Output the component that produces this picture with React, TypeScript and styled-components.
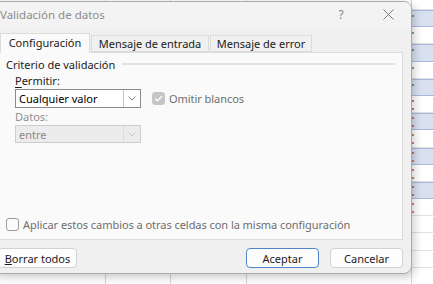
import React from "react";
import styled, { createGlobalStyle } from "styled-components";

const FONT = `"Noto Sans", "Open Sans", sans-serif`;
const ROW_HEIGHT = 17.2;
const BLUE_ROWS = [1, 3, 5, 7, 9, 11];
const GREEN_ROWS = [0, 1, 2, 3, 4, 5];
const RED_ROWS = [6, 7, 8, 9, 10, 11, 12];

const GlobalStyle = createGlobalStyle`
  html, body {
    margin: 0;
    padding: 0;
    background: #ffffff;
  }
  body {
    font-family: ${FONT};
    font-size: 11px;
  }
`;

const Desktop = styled.div`
  position: relative;
  width: 434px;
  height: 284px;
  overflow: hidden;
  background: #ffffff;
`;

const Sheet = styled.div`
  display: flex;
  flex-direction: column;
  margin-top: -7.2px;
`;

const SheetRow = styled.div<{ $banded: boolean }>`
  display: grid;
  grid-template-columns: 106px 65px 76px 165px 22px;
  height: ${ROW_HEIGHT}px;
  box-sizing: border-box;
  background: ${(p) => (p.$banded ? "#d9e0f0" : "#ffffff")};
  border-top: 1px solid ${(p) => (p.$banded ? "#a8b8de" : "transparent")};
  border-bottom: 1px solid ${(p) => (p.$banded ? "#a8b8de" : "#e1e1e1")};
`;

const Cell = styled.div`
  position: relative;
  border-right: 1px solid #d6d6d6;
`;

const Marker = styled.span<{ $color: string; $top: number }>`
  position: absolute;
  left: 0;
  top: ${(p) => p.$top}px;
  width: 2px;
  height: 2px;
  border-radius: 1px;
  background: ${(p) => p.$color};
`;

const Dialog = styled.div`
  position: absolute;
  left: -8px;
  top: 1px;
  width: 420px;
  height: 273px;
  box-sizing: border-box;
  display: flex;
  flex-direction: column;
  background: #f0f0f0;
  border: 1px solid #a9a9a9;
  border-radius: 8px;
  box-shadow: 2px 3px 10px rgba(0, 0, 0, 0.22);
  overflow: hidden;
  color: #1b1b1b;
`;

const TitleBar = styled.div`
  display: flex;
  align-items: center;
  height: 25px;
  padding-left: 7px;
  background: #f3f3f3;
`;

const Title = styled.div`
  flex: 1;
  font-size: 11.5px;
  color: #8c8c8c;
`;

const TitleButton = styled.div<{ $width: number }>`
  width: ${(p) => p.$width}px;
  display: flex;
  justify-content: center;
  align-items: center;
  color: #8a8a8a;
  font-size: 12px;
`;

const Body = styled.div`
  display: flex;
  flex-direction: column;
  padding: 6px 8px 0 6px;
  flex: 1;
`;

const TabStrip = styled.div`
  display: flex;
  align-items: flex-end;
  height: 19px;
  padding-left: 1px;
  position: relative;
  z-index: 1;
`;

const Tab = styled.div<{ $active?: boolean; $width: number }>`
  box-sizing: border-box;
  width: ${(p) => p.$width}px;
  height: ${(p) => (p.$active ? 20 : 17)}px;
  margin-bottom: ${(p) => (p.$active ? -1 : 0)}px;
  margin-right: 1px;
  display: flex;
  align-items: center;
  justify-content: center;
  background: ${(p) => (p.$active ? "#fafafa" : "#f0f0f0")};
  border: 1px solid #dcdcdc;
  border-bottom: ${(p) => (p.$active ? "none" : "1px solid #dcdcdc")};
  color: #1b1b1b;
  padding-bottom: ${(p) => (p.$active ? 2 : 0)}px;
`;

const Panel = styled.div`
  box-sizing: border-box;
  height: 188px;
  display: flex;
  flex-direction: column;
  padding: 3px 7px 0 6px;
  background: #fafafa;
  border: 1px solid #dcdcdc;
`;

const GroupHeader = styled.div`
  display: flex;
  align-items: center;
  gap: 7px;
  height: 16px;
`;

const GroupRule = styled.div`
  flex: 1;
  height: 2px;
  background: #e2e2e2;
`;

const Fields = styled.div`
  display: grid;
  grid-template-columns: 126px auto;
  column-gap: 11px;
  padding-left: 9px;
  margin-top: 1px;
`;

const Label = styled.div<{ $disabled?: boolean }>`
  grid-column: 1 / span 2;
  height: ${(p) => (p.$disabled ? 17 : 16)}px;
  line-height: ${(p) => (p.$disabled ? 17 : 16)}px;
  color: ${(p) => (p.$disabled ? "#8f8f8f" : "#1b1b1b")};
  & u {
    text-underline-offset: 2px;
  }
`;

const Select = styled.div<{ $disabled?: boolean }>`
  box-sizing: border-box;
  height: ${(p) => (p.$disabled ? 18 : 19)}px;
  display: flex;
  align-items: stretch;
  background: ${(p) => (p.$disabled ? "#ececec" : "#ffffff")};
  border: 1px solid ${(p) => (p.$disabled ? "#cdcdcd" : "#8a8a8a")};
  color: ${(p) => (p.$disabled ? "#8a8a8a" : "#000000")};
`;

const SelectValue = styled.div`
  flex: 1;
  display: flex;
  align-items: center;
  padding-left: 3px;
`;

const SelectArrow = styled.div<{ $disabled?: boolean }>`
  width: 16px;
  display: flex;
  align-items: center;
  justify-content: center;
  border-left: 1px solid ${(p) => (p.$disabled ? "#dedede" : "#c8c8c8")};
  color: ${(p) => (p.$disabled ? "#c4c4c4" : "#7a7a7a")};
`;

const CheckRow = styled.label<{ $muted?: boolean }>`
  display: flex;
  align-items: center;
  gap: 4px;
  color: ${(p) => (p.$muted ? "#6e6e6e" : "#1b1b1b")};
  letter-spacing: -0.05px;
`;

const Box = styled.span<{ $checked?: boolean }>`
  box-sizing: border-box;
  width: 13px;
  height: 13px;
  border-radius: 3px;
  display: flex;
  align-items: center;
  justify-content: center;
  background: ${(p) => (p.$checked ? "#c6c6c6" : "#fbfbfb")};
  border: 1px solid ${(p) => (p.$checked ? "#c6c6c6" : "#9c9c9c")};
`;

const Spacer = styled.div`
  flex: 1;
`;

const BottomCheck = styled.div`
  padding-bottom: 7px;
`;

const Footer = styled.div`
  display: flex;
  align-items: center;
  gap: 11px;
  height: 20px;
  margin-top: 8px;
  margin-left: -1px;
`;

const Button = styled.div<{ $primary?: boolean; $width: number }>`
  box-sizing: border-box;
  width: ${(p) => p.$width}px;
  height: 20px;
  display: flex;
  align-items: center;
  justify-content: center;
  background: #fdfdfd;
  border: 1px solid ${(p) => (p.$primary ? "#4f86c9" : "#d2d2d2")};
  border-radius: 4px;
  color: #1b1b1b;
`;

const Chevron = ({ color }: { color?: string }): JSX.Element => (
  <svg width="8" height="5" viewBox="0 0 8 5">
    <path d="M0.5 0.5 L4 4 L7.5 0.5" fill="none" stroke={color || "currentColor"} strokeWidth="1" />
  </svg>
);

const CloseIcon = (): JSX.Element => (
  <svg width="11" height="11" viewBox="0 0 11 11">
    <path d="M0.5 0.5 L10.5 10.5 M10.5 0.5 L0.5 10.5" stroke="#7d7d7d" strokeWidth="1" />
  </svg>
);

const CheckMark = (): JSX.Element => (
  <svg width="9" height="7" viewBox="0 0 9 7">
    <path d="M1 3.5 L3.4 5.8 L8 1" fill="none" stroke="#ffffff" strokeWidth="1.2" />
  </svg>
);

const SpreadSheet = (): JSX.Element => {
  const rows = Array.from({ length: 18 }, (_, i) => i);
  return (
    <Sheet>
      {rows.map((i) => (
        <SheetRow key={i} $banded={BLUE_ROWS.includes(i)}>
          <Cell />
          <Cell />
          <Cell />
          <Cell />
          <Cell>
            {GREEN_ROWS.includes(i) && <Marker $color="#3f8a5c" $top={4} />}
            {RED_ROWS.includes(i) && (
              <>
                <Marker $color="#b8553a" $top={3} />
                <Marker $color="#b8553a" $top={11} />
              </>
            )}
          </Cell>
        </SheetRow>
      ))}
    </Sheet>
  );
};

export default function App(): JSX.Element {
  return (
    <>
      <GlobalStyle />
      <Desktop>
        <SpreadSheet />
        <Dialog>
          <TitleBar>
            <Title>Validación de datos</Title>
            <TitleButton $width={48}>?</TitleButton>
            <TitleButton $width={46}>
              <CloseIcon />
            </TitleButton>
          </TitleBar>
          <Body>
            <TabStrip>
              <Tab $active $width={90}>
                Configuración
              </Tab>
              <Tab $width={118}>Mensaje de entrada</Tab>
              <Tab $width={102}>Mensaje de error</Tab>
            </TabStrip>
            <Panel>
              <GroupHeader>
                Criterio de validación
                <GroupRule />
              </GroupHeader>
              <Fields>
                <Label>
                  <u>P</u>ermitir:
                </Label>
                <Select>
                  <SelectValue>Cualquier valor</SelectValue>
                  <SelectArrow>
                    <Chevron />
                  </SelectArrow>
                </Select>
                <CheckRow $muted>
                  <Box $checked>
                    <CheckMark />
                  </Box>
                  Omitir blancos
                </CheckRow>
                <Label $disabled>Datos:</Label>
                <Select $disabled>
                  <SelectValue>entre</SelectValue>
                  <SelectArrow $disabled>
                    <Chevron />
                  </SelectArrow>
                </Select>
              </Fields>
              <Spacer />
              <BottomCheck>
                <CheckRow $muted>
                  <Box />
                  Aplicar estos cambios a otras celdas con la misma configuración
                </CheckRow>
              </BottomCheck>
            </Panel>
            <Footer>
              <Button $width={79}>
                <span>
                  <u>B</u>orrar todos
                </span>
              </Button>
              <Spacer />
              <Button $primary $width={73}>
                Aceptar
              </Button>
              <Button $width={73}>Cancelar</Button>
            </Footer>
          </Body>
        </Dialog>
      </Desktop>
    </>
  );
}
